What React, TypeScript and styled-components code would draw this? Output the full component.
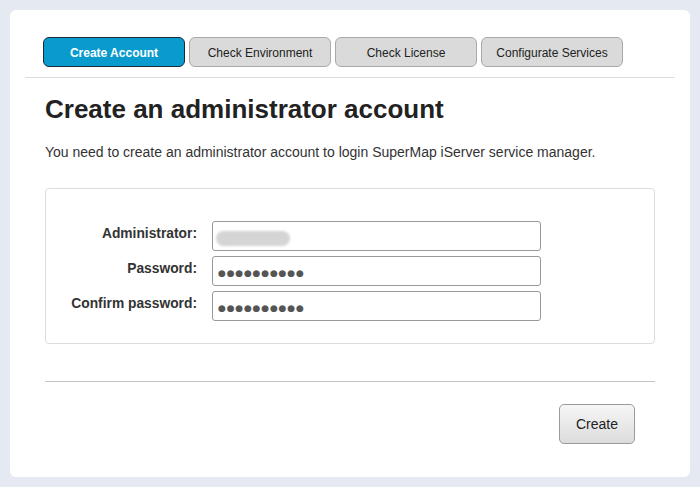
import React from "react";
import styled, { createGlobalStyle } from "styled-components";

const Global = createGlobalStyle`
  html, body { margin: 0; padding: 0; background: #e5e9f1; }
  body { font-family: "Liberation Sans", Arial, sans-serif; }
`;

const Page = styled.div`
  padding: 10px;
  box-sizing: border-box;
  width: 700px;
  height: 487px;
`;

const Card = styled.div`
  background: #ffffff;
  border-radius: 6px;
  height: 467px;
  box-sizing: border-box;
  padding: 27px 15px 0;
`;

const TabBar = styled.div`
  display: flex;
  gap: 4px;
  padding: 0 0 10px 18px;
  border-bottom: 1px solid #dedede;
`;

const Tab = styled.div<{ $active?: boolean }>`
  width: 142px;
  height: 30px;
  box-sizing: border-box;
  display: flex;
  align-items: center;
  justify-content: center;
  padding-top: 2px;
  border-radius: 6px;
  font-size: 12px;
  border: 1px solid ${(p) => (p.$active ? "#1b2a38" : "#a9a9a9")};
  background: ${(p) => (p.$active ? "#0a9bce" : "#dadada")};
  color: ${(p) => (p.$active ? "#ffffff" : "#222222")};
  font-weight: ${(p) => (p.$active ? "bold" : "normal")};
`;

const Content = styled.div`
  padding: 0 20px;
`;

const Title = styled.h1`
  margin: 16px 0 0;
  font-size: 26px;
  line-height: 30px;
  font-weight: bold;
  color: #222222;
`;

const Description = styled.p`
  margin: 20px 0 0;
  font-size: 14px;
  line-height: 16px;
  color: #333333;
`;

const FormBox = styled.div`
  margin-top: 28px;
  border: 1px solid #dcdcdc;
  border-radius: 4px;
  padding: 32px 0 22px;
  display: grid;
  grid-template-columns: 151px 329px;
  column-gap: 15px;
  row-gap: 5px;
  align-items: center;
`;

const Label = styled.label`
  text-align: right;
  font-size: 13.8px;
  font-weight: bold;
  color: #333333;
  margin-top: -5px;
`;

const Field = styled.div`
  height: 30px;
  box-sizing: border-box;
  border: 1px solid #999999;
  border-radius: 3px;
  background: #ffffff;
  position: relative;
  display: flex;
  align-items: center;
  padding-left: 5px;
`;

const Blur = styled.div`
  position: absolute;
  left: 3px;
  top: 9px;
  width: 74px;
  height: 15px;
  border-radius: 8px;
  background: #d5d5d5;
  filter: blur(1px);
`;

const Dots = styled.span`
  font-family: "DejaVu Sans", sans-serif;
  font-size: 9px;
  letter-spacing: 0.8px;
  color: #555555;
  margin-top: 3px;
`;

const Divider = styled.div`
  margin-top: 37px;
  height: 1px;
  background: #c4c4c4;
`;

const Footer = styled.div`
  display: flex;
  justify-content: flex-end;
  padding: 22px 20px 0 0;
`;

const Button = styled.button`
  width: 76px;
  height: 40px;
  border: 1px solid #9a9a9a;
  border-radius: 5px;
  background: linear-gradient(#f6f6f6, #dcdcdc);
  font-family: "Liberation Sans", Arial, sans-serif;
  font-size: 14px;
  color: #222222;
  padding: 0;
`;

const tabs = ["Create Account", "Check Environment", "Check License", "Configurate Services"];

export default function App() {
  return (
    <>
      <Global />
      <Page>
        <Card>
          <TabBar>
            {tabs.map((t, i) => (
              <Tab key={t} $active={i === 0}>
                {t}
              </Tab>
            ))}
          </TabBar>
          <Content>
            <Title>Create an administrator account</Title>
            <Description>
              You need to create an administrator account to login SuperMap iServer service manager.
            </Description>
            <FormBox>
              <Label>Administrator:</Label>
              <Field>
                <Blur />
              </Field>
              <Label>Password:</Label>
              <Field>
                <Dots>●●●●●●●●●●</Dots>
              </Field>
              <Label>Confirm password:</Label>
              <Field>
                <Dots>●●●●●●●●●●</Dots>
              </Field>
            </FormBox>
            <Divider />
            <Footer>
              <Button>Create</Button>
            </Footer>
          </Content>
        </Card>
      </Page>
    </>
  );
}
